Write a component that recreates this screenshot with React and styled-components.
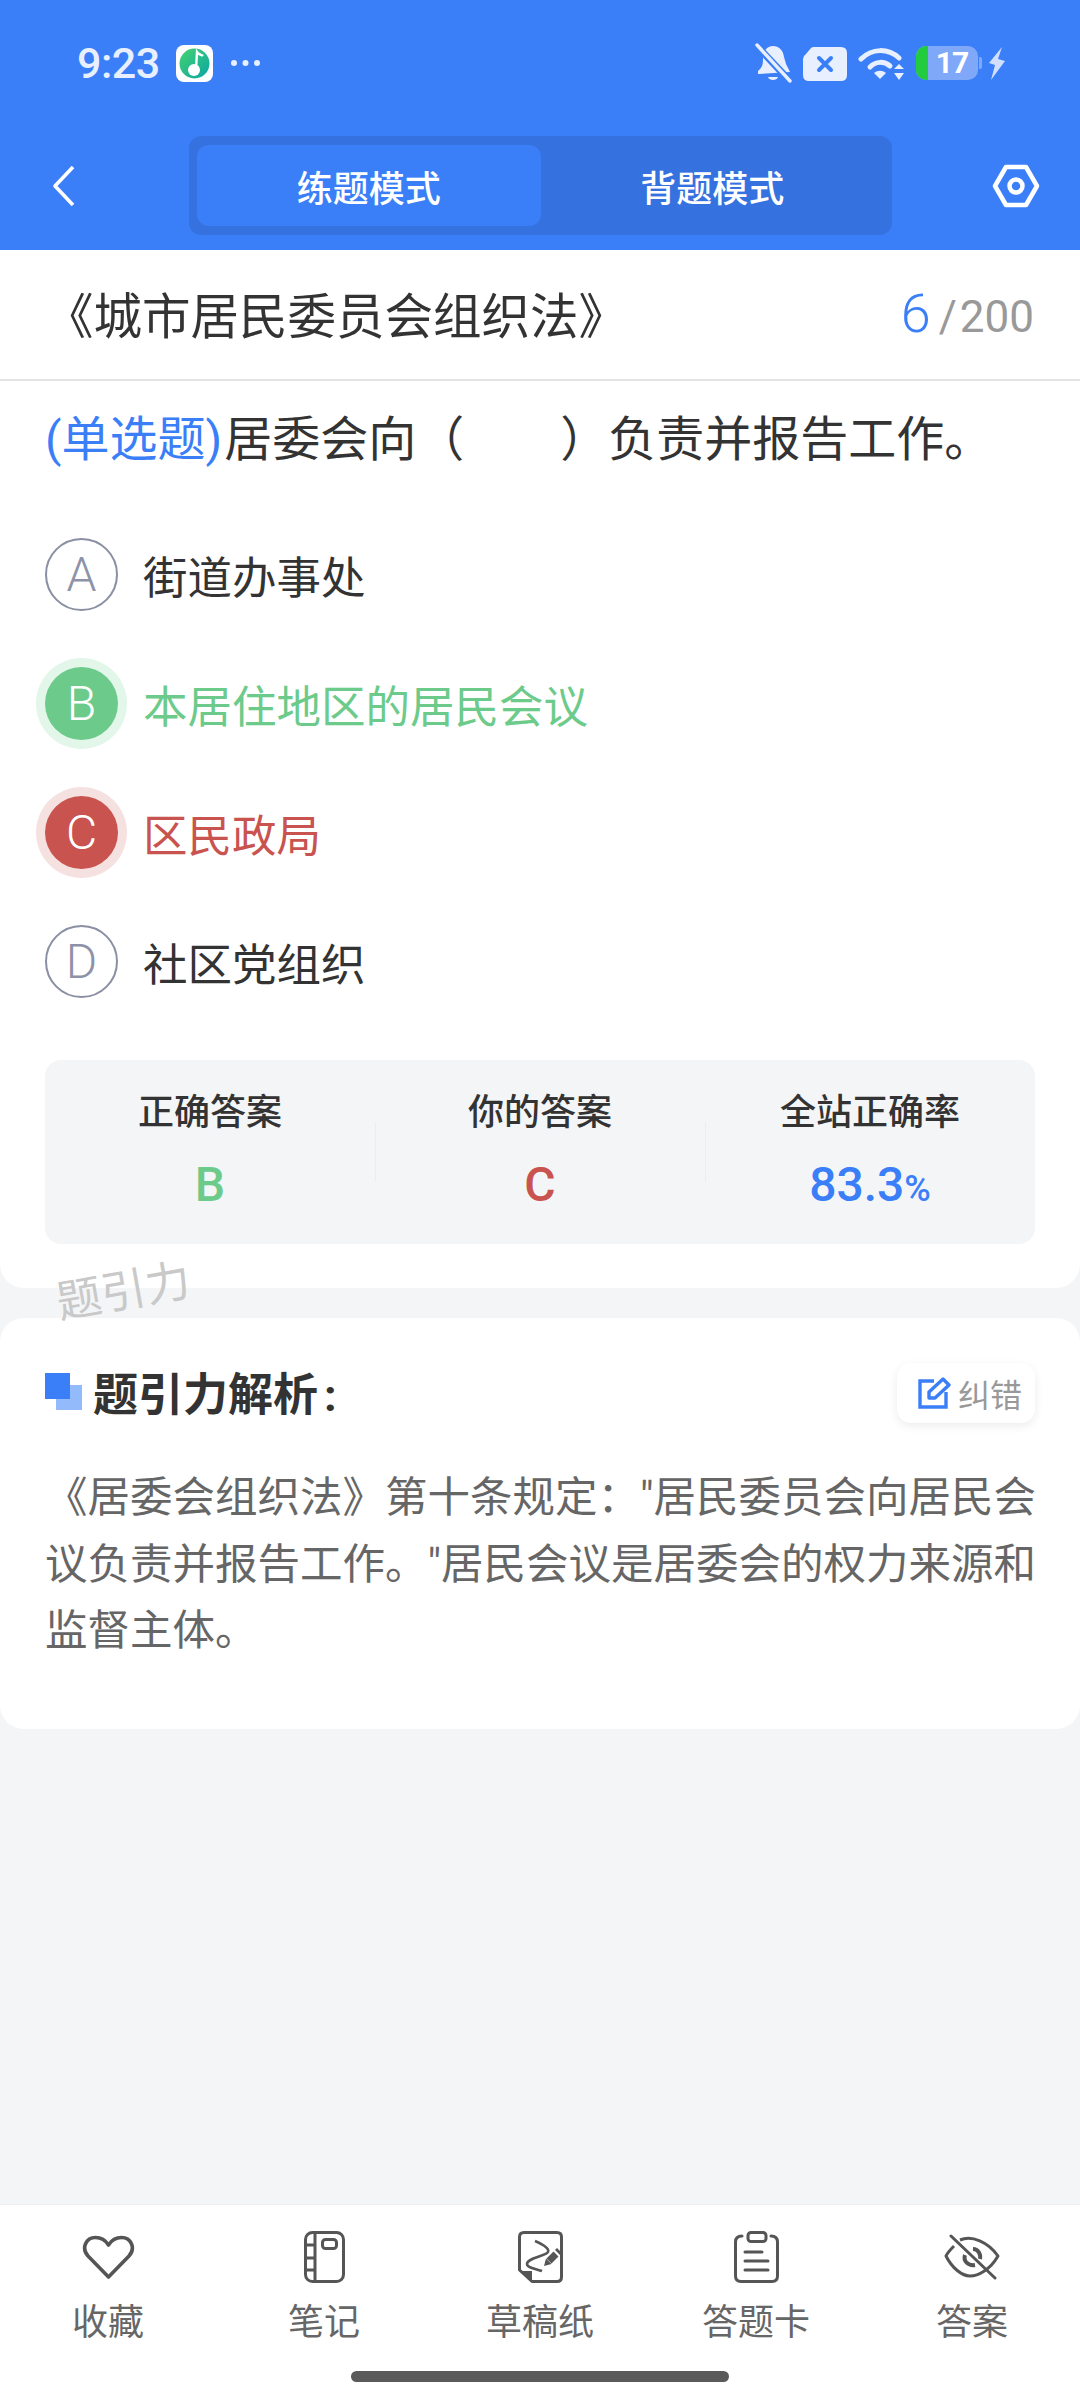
import styled, { createGlobalStyle } from 'styled-components'

const GlobalStyle = createGlobalStyle`
  html, body {
    margin: 0;
    padding: 0;
    background: #f4f5f7;
  }
  * {
    box-sizing: border-box;
  }
  body {
    font-family: Roboto, "Noto Sans CJK SC", sans-serif;
  }
`

const Page = styled.div`
  display: flex;
  flex-direction: column;
  width: 1080px;
  height: 2400px;
  overflow: hidden;
  background: #f4f5f7;
`

const Header = styled.header`
  background: #3b7ff8;
  height: 250px;
  flex: none;
`

const StatusBar = styled.div`
  display: flex;
  align-items: center;
  justify-content: space-between;
  height: 126px;
  padding: 0 75px 0 77px;
  color: #e8efff;
`

const StatusGroup = styled.div`
  display: flex;
  align-items: center;
  gap: ${p => p.$gap || 0}px;
`

const Time = styled.span`
  width: 99px;
  font-size: 43px;
  font-weight: 500;
  letter-spacing: -0.5px;
`

const Battery = styled.div`
  display: flex;
  width: 62px;
  height: 34px;
  border-radius: 10px;
  overflow: hidden;
  background: #7fa8f9;
  color: #fff;
  font-size: 30px;
  font-weight: 700;
  line-height: 34px;

  span {
    flex: 1;
    text-align: center;
    padding-right: 2px;
    letter-spacing: -1px;
  }
`

const BatteryLevel = styled.i`
  display: block;
  width: 12px;
  background: #22cc3e;
`

const BatteryTip = styled.i`
  display: block;
  width: 3px;
  height: 12px;
  margin-left: 1px;
  border-radius: 0 2px 2px 0;
  background: #7fa8f9;
`

const Toolbar = styled.div`
  display: flex;
  align-items: flex-start;
  padding: 10px 40px 0 52px;
`

const BackButton = styled.div`
  display: flex;
  align-items: center;
  width: 137px;
  height: 99px;
`

const SettingsButton = styled.div`
  display: flex;
  align-items: center;
  height: 99px;
  margin-left: auto;
`

const Tabs = styled.div`
  display: flex;
  width: 703px;
  height: 99px;
  padding: 9px 8px;
  border-radius: 12px;
  background: #3672df;
`

const Tab = styled.div`
  flex: 1;
  display: flex;
  align-items: center;
  justify-content: center;
  border-radius: 12px;
  color: #fff;
  font-size: 36px;
  font-weight: 500;
  background: ${p => (p.$active ? '#3b7ff8' : 'transparent')};
`

const QuestionCard = styled.section`
  position: relative;
  height: 1038px;
  flex: none;
  background: #fff;
  border-radius: 0 0 24px 24px;
`

const TitleRow = styled.div`
  display: flex;
  align-items: center;
  justify-content: space-between;
  height: 131px;
  padding: 0 46px 3px 45px;
  border-bottom: 2px solid #e2e3e5;
`

const Title = styled.h1`
  margin: 0;
  font-size: 48.5px;
  font-weight: 400;
  color: #333;
`

const Counter = styled.div`
  display: flex;
  align-items: baseline;
  color: #999;
  font-size: 44px;
`

const CounterNow = styled.span`
  margin-right: 8px;
  color: #3b7ff8;
  font-size: 54px;
  font-weight: 300;
`

const CounterSlash = styled.span`
  margin-right: 3px;
`

const Question = styled.p`
  margin: 0;
  padding: 28px 45px 0;
  font-size: 48px;
  line-height: 62px;
  color: #333;

  em {
    margin-right: 2px;
    font-style: normal;
    color: #3b7ff8;
  }
`

const Options = styled.div`
  display: flex;
  flex-direction: column;
  gap: 56px;
  padding: 67px 45px 0;
`

const toneText = { right: '#6ccb8a', wrong: '#c9534f' }
const toneRing = { right: '#e2f6ea', wrong: '#f6e1e1' }

const Option = styled.div`
  display: flex;
  align-items: center;
  height: 73px;
  gap: 25px;
  font-size: 44.5px;
  color: ${p => toneText[p.$tone] || '#333'};
`

const OptionMark = styled.span`
  display: flex;
  align-items: center;
  justify-content: center;
  flex: none;
  width: 73px;
  height: 73px;
  border-radius: 50%;
  font-size: 48px;
  font-weight: 300;
  color: ${p => (p.$tone ? '#fff' : '#8e92a8')};
  background: ${p => toneText[p.$tone] || '#fff'};
  border: ${p => (p.$tone ? 'none' : '2px solid #8a8fa3')};
  box-shadow: ${p => (p.$tone ? `0 0 0 9px ${toneRing[p.$tone]}` : 'none')};
`

const Stats = styled.div`
  display: grid;
  grid-template-columns: repeat(3, 1fr);
  height: 184px;
  margin: 62px 45px 0;
  padding-top: 31px;
  border-radius: 16px;
  background: #f4f5f7;
`

const Stat = styled.div`
  position: relative;
  display: flex;
  flex-direction: column;
  align-items: center;
  gap: 23px;

  & + &::before {
    content: '';
    position: absolute;
    left: 0;
    top: 31px;
    width: 1px;
    height: 60px;
    background: #ecedef;
  }
`

const StatLabel = styled.span`
  font-size: 36px;
  font-weight: 500;
  line-height: 44px;
  color: #333;
`

const StatValue = styled.span`
  font-size: 48px;
  font-weight: 500;
  line-height: 54px;
  color: ${p => p.$color};

  small {
    font-size: 36px;
  }
`

const Watermark = styled.span`
  position: absolute;
  left: 56px;
  top: 1015px;
  font-size: 45px;
  line-height: 54px;
  color: #c9c9c9;
  transform: rotate(-10deg);
  z-index: 2;
`

const AnalysisCard = styled.section`
  height: 411px;
  flex: none;
  margin-top: 30px;
  padding: 45px 45px 0;
  background: #fff;
  border-radius: 24px;
`

const AnalysisHead = styled.div`
  display: flex;
  align-items: center;
  justify-content: space-between;
  height: 60px;
`

const AnalysisTitle = styled.h2`
  display: flex;
  align-items: center;
  gap: 11px;
  margin: -4px 0 0;
  font-size: 45px;
  font-weight: 700;
  color: #333;

  i {
    margin-left: 6px;
    font-style: normal;
  }
`

const TitleMark = styled.span`
  width: 37px;
  height: 37px;
  flex: none;
  background: linear-gradient(#3b7ff8, #3b7ff8) 0 0 / 25px 26px no-repeat,
    linear-gradient(#93bbfb, #93bbfb) 11px 12px / 26px 25px no-repeat;
`

const FixButton = styled.div`
  display: flex;
  align-items: center;
  gap: 7px;
  width: 138px;
  height: 60px;
  padding-left: 21px;
  border-radius: 14px;
  background: #fff;
  box-shadow: 0 3px 10px rgba(0, 0, 0, 0.08);
  font-size: 32px;
  color: #999;
`

const AnalysisText = styled.p`
  margin: 42px 0 0;
  width: 992px;
  font-size: 42.5px;
  line-height: 66.5px;
  color: #666;
`

const BottomNav = styled.nav`
  display: grid;
  grid-template-columns: repeat(5, 1fr);
  height: 196px;
  flex: none;
  margin-top: auto;
  padding-top: 24px;
  background: #fff;
  border-top: 1px solid #eeeff1;
`

const NavItem = styled.div`
  display: flex;
  flex-direction: column;
  align-items: center;
  font-size: 36px;
  line-height: 44px;
  color: #666;
`

const NavIcon = styled.div`
  display: flex;
  align-items: center;
  justify-content: center;
  height: 56px;
  margin-bottom: 16px;
`

const HomeBar = styled.div`
  position: absolute;
  left: 351px;
  top: 2371px;
  width: 378px;
  height: 11px;
  border-radius: 6px;
  background: #5a5a5a;
`

const QQMusicIcon = () => (
  <svg width="37" height="37" viewBox="0 0 37 37">
    <defs>
      <linearGradient id="qq" x1="0" y1="0" x2="1" y2="1">
        <stop offset="0" stopColor="#45d36f" />
        <stop offset="1" stopColor="#0aa5a5" />
      </linearGradient>
    </defs>
    <rect width="37" height="37" rx="8" fill="#fff" />
    <circle cx="18.5" cy="18.5" r="15" fill="url(#qq)" />
    <circle cx="18" cy="25" r="6" fill="#fff" />
    <path d="M20 25 L21 7 C23 10 26 10 27 11" fill="none" stroke="#fff" strokeWidth="2.4" />
  </svg>
)

const MoreDots = () => (
  <svg width="31" height="8" viewBox="0 0 31 8" fill="#e8efff" style={{ marginLeft: 17 }}>
    <circle cx="4" cy="4" r="3" />
    <circle cx="15.5" cy="4" r="3" />
    <circle cx="27" cy="4" r="3" />
  </svg>
)

const BellOff = () => (
  <svg width="37" height="40" viewBox="0 0 37 40" fill="#e8efff">
    <path d="M3 28 C8 24 8 20 8 15 C8 8 12 3 18 3 C24 3 28 7 29 14 L31 21 L35 29 L3 31 Z" />
    <path d="M13 34 H23 C22 38 14 38 13 34 Z" />
    <path d="M2 3 L34 37" stroke="#3b7ff8" strokeWidth="7" />
    <path d="M2 2 L35 38" stroke="#e8efff" strokeWidth="3.4" strokeLinecap="round" />
  </svg>
)

const TagX = () => (
  <svg width="44" height="35" viewBox="0 0 44 35">
    <path d="M11 1 H38 Q44 1 44 7 V29 Q44 35 38 35 H6 Q0 35 0 29 V13 Q0 10 3 8 L8 2 Q9 1 11 1 Z" fill="#e8efff" />
    <path d="M16 12 L28 24 M28 12 L16 24" stroke="#3b7ff8" strokeWidth="4" strokeLinecap="round" />
  </svg>
)

const WifiArrows = () => (
  <svg width="47" height="35" viewBox="0 0 47 35" fill="none">
    <path d="M3 13 C14 2 30 2 41 12" stroke="#e8efff" strokeWidth="5" strokeLinecap="round" />
    <path d="M12 21 C18 15 26 15 32 20" stroke="#e8efff" strokeWidth="5" strokeLinecap="round" />
    <path d="M16 27 C20 24 24 24 28 27 L22 33 Z" fill="#e8efff" />
    <path d="M36 23 L41 18 L46 23 Z M36 27 H46 L41 34 Z" fill="#e8efff" />
  </svg>
)

const Bolt = () => (
  <svg width="16" height="33" viewBox="0 0 16 33" fill="#cfdffd" style={{ marginLeft: 7 }}>
    <path d="M13 0 L0 16 L6 18 L2 33 L16 14 L9 12 Z" />
  </svg>
)

const BackIcon = () => (
  <svg width="24" height="42" viewBox="0 0 24 42" fill="none">
    <path d="M21 2 L3 21 L21 40" stroke="#fff" strokeWidth="3.6" strokeLinejoin="round" />
  </svg>
)

const SettingsIcon = () => (
  <svg width="48" height="44" viewBox="0 0 48 44" fill="none" stroke="#fff" strokeWidth="4.5">
    <path d="M14 3 H34 L45 22 L34 41 H14 L3 22 Z" strokeLinejoin="round" />
    <circle cx="24" cy="22" r="6.5" />
  </svg>
)

const FixIcon = () => (
  <svg width="33" height="32" viewBox="0 0 33 32" fill="none" stroke="#3b7ff8" strokeWidth="3.4">
    <path d="M16 4 H2 V30 H28 V15" />
    <path d="M11 21 V15 L25 2 L31 8 L17 21 Z" strokeLinejoin="round" />
  </svg>
)

const HeartIcon = () => (
  <svg width="53" height="45" viewBox="0 0 53 45" fill="none" stroke="#555" strokeWidth="3.6">
    <path d="M26.5 42 L6 21 C-1 13 4 2.5 13.5 2.5 C19 2.5 24 6 26.5 10 C29 6 34 2.5 39.5 2.5 C49 2.5 54 13 47 21 Z" strokeLinejoin="round" />
  </svg>
)

const NotebookIcon = () => (
  <svg width="41" height="52" viewBox="0 0 41 52" fill="none" stroke="#555" strokeWidth="3">
    <rect x="1.5" y="1.5" width="38" height="49" rx="7" />
    <path d="M11 2 V50 M2 14 H11 M2 27 H11 M2 39 H11" />
    <rect x="18.5" y="8.5" width="14" height="9" rx="3" />
  </svg>
)

const DraftIcon = () => (
  <svg width="45" height="52" viewBox="0 0 45 52" fill="none" stroke="#555" strokeWidth="3">
    <path d="M1.5 39 V6 Q1.5 1.5 6 1.5 H39 Q43.5 1.5 43.5 6 V46 Q43.5 50.5 39 50.5 H14 Z" strokeLinejoin="round" />
    <path d="M2 40 H14 V51 Z" fill="#555" stroke="none" />
    <path d="M17 10 C22 12 32 17 30 21 C28 25 9 27 9 33 C9 37 19 38 24 40" strokeWidth="2.6" />
    <path d="M26 35 L28 27.5 L33.5 33 Z" fill="#555" stroke="none" />
    <path d="M31 30 L38 23" strokeWidth="7" />
    <path d="M39.5 21.5 L41.5 19.5" strokeWidth="7" />
  </svg>
)

const ClipboardIcon = () => (
  <svg width="45" height="52" viewBox="0 0 45 52" fill="none" stroke="#555" strokeWidth="3">
    <path d="M8 5 Q1.5 5 1.5 11 V45 Q1.5 50.5 7 50.5 H38 Q43.5 50.5 43.5 45 V11 Q43.5 5 37 5" strokeLinecap="round" />
    <rect x="14" y="1.5" width="18" height="9" rx="3" />
    <path d="M11 21 H28 M11 30 H34 M11 39 H34" strokeLinecap="round" />
  </svg>
)

const EyeOffIcon = () => (
  <svg width="56" height="46" viewBox="0 0 56 46" fill="none" stroke="#555" strokeWidth="3">
    <path d="M16 6 C28 1 44 8 54 22 C46 36 34 42 26 42 C18 42 8 34 2 22 C4 18 7 15 10 12" strokeLinejoin="round" />
    <path d="M21 21 C19 27 24 32 31 31 M29 15 C34 15 37 20 36 25" strokeWidth="4" />
    <path d="M7 2 L51 44" strokeLinecap="round" />
  </svg>
)

const options = [
  { key: 'A', text: '街道办事处' },
  { key: 'B', text: '本居住地区的居民会议', tone: 'right' },
  { key: 'C', text: '区民政局', tone: 'wrong' },
  { key: 'D', text: '社区党组织' },
]

const navItems = [
  { label: '收藏', icon: <HeartIcon /> },
  { label: '笔记', icon: <NotebookIcon /> },
  { label: '草稿纸', icon: <DraftIcon /> },
  { label: '答题卡', icon: <ClipboardIcon /> },
  { label: '答案', icon: <EyeOffIcon /> },
]

const App = () => {
  return (
    <Page>
      <GlobalStyle />
      <Header>
        <StatusBar>
          <StatusGroup>
            <Time>9:23</Time>
            <QQMusicIcon />
            <MoreDots />
          </StatusGroup>
          <StatusGroup $gap={11}>
            <BellOff />
            <TagX />
            <WifiArrows />
            <StatusGroup>
              <Battery>
                <BatteryLevel />
                <span>17</span>
              </Battery>
              <BatteryTip />
              <Bolt />
            </StatusGroup>
          </StatusGroup>
        </StatusBar>
        <Toolbar>
          <BackButton><BackIcon /></BackButton>
          <Tabs>
            <Tab $active>练题模式</Tab>
            <Tab>背题模式</Tab>
          </Tabs>
          <SettingsButton><SettingsIcon /></SettingsButton>
        </Toolbar>
      </Header>

      <QuestionCard>
        <TitleRow>
          <Title>《城市居民委员会组织法》</Title>
          <Counter>
            <CounterNow>6</CounterNow>
            <CounterSlash>/</CounterSlash>
            200
          </Counter>
        </TitleRow>
        <Question>
          <em>(单选题)</em>居委会向（　　）负责并报告工作。
        </Question>
        <Options>
          {options.map(o => (
            <Option key={o.key} $tone={o.tone}>
              <OptionMark $tone={o.tone}>{o.key}</OptionMark>
              {o.text}
            </Option>
          ))}
        </Options>
        <Stats>
          <Stat>
            <StatLabel>正确答案</StatLabel>
            <StatValue $color="#6ccb8a">B</StatValue>
          </Stat>
          <Stat>
            <StatLabel>你的答案</StatLabel>
            <StatValue $color="#c9534f">C</StatValue>
          </Stat>
          <Stat>
            <StatLabel>全站正确率</StatLabel>
            <StatValue $color="#3b7ff8">83.3<small>%</small></StatValue>
          </Stat>
        </Stats>
        <Watermark>题引力</Watermark>
      </QuestionCard>

      <AnalysisCard>
        <AnalysisHead>
          <AnalysisTitle>
            <TitleMark />
            <span>题引力解析<i>:</i></span>
          </AnalysisTitle>
          <FixButton>
            <FixIcon />
            纠错
          </FixButton>
        </AnalysisHead>
        <AnalysisText>
          《居委会组织法》第十条规定："居民委员会向居民会议负责并报告工作。"居民会议是居委会的权力来源和监督主体。
        </AnalysisText>
      </AnalysisCard>

      <BottomNav>
        {navItems.map(item => (
          <NavItem key={item.label}>
            <NavIcon>{item.icon}</NavIcon>
            {item.label}
          </NavItem>
        ))}
      </BottomNav>
      <HomeBar />
    </Page>
  )
}

export default App
